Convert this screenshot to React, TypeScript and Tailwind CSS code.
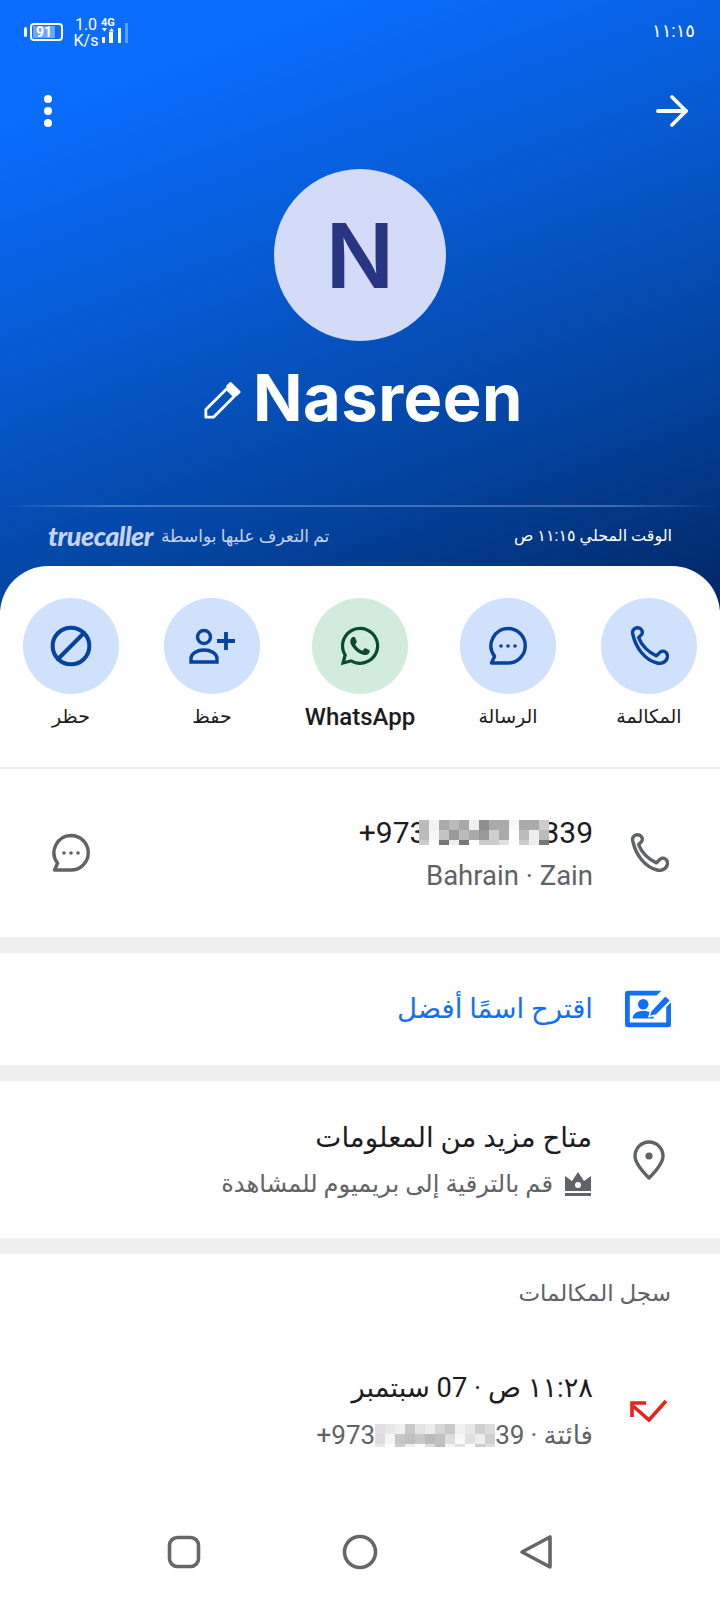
import type { ReactNode } from 'react'
import { ArrowRight, Ban } from 'lucide-react'
import { FaWhatsapp } from 'react-icons/fa'

const ARABIC = 'font-["Roboto","Noto_Sans","DejaVu_Sans",sans-serif]'

const PIXELS_DARK = [
  ['#bbbbbb', '#f2f2f2', '#aaaaaa', '#bbbbbb', '#a8a8a8', '#f0f0f0', '#8f8f8f', '#aaaaaa', '#aaaaaa', '#f8f8f8', '#aaaaaa', '#aaaaaa', '#cccccc'],
  ['#bbbbbb', '#f5f5f5', '#c4c4c4', '#999999', '#bbbbbb', '#aaaaaa', '#999999', '#d0d0d0', '#aaaaaa', '#ffffff', '#bbbbbb', '#eeeeee', '#bbbbbb'],
  ['#cccccc', '#ffffff', '#777777', '#eeeeee', '#777777', '#ffffff', '#cccccc', '#cccccc', '#e0e0e0', '#ffffff', '#cccccc', '#eeeeee', '#777777'],
]

const PIXELS_LIGHT = [
  ['#e0e0e0', '#e8e8e8', '#f0f0f0', '#c8c8c8', '#e4e4e4', '#ececec', '#d6d6d6', '#c8c8c8', '#f0f0f0', '#e8e8e8', '#d0d0d0', '#dcdcdc'],
  ['#dddddd', '#f4f4f4', '#c6c6c6', '#c0c0c0', '#c8c8c8', '#bcbcbc', '#c2c2c2', '#dedede', '#f8f8f8', '#e0e0e0', '#eeeeee', '#d0d0d0'],
  ['#e8e8e8', '#ffffff', '#cccccc', '#f0f0f0', '#ffffff', '#dddddd', '#bbbbbb', '#f4f4f4', '#e0e0e0', '#ffffff', '#cccccc', '#dddddd'],
]

function Pixels({ rows, size, last }: { rows: string[][]; size: number; last: number }) {
  return (
    <span dir="ltr" className="relative inline-flex flex-col align-middle">
      {rows.map((row, r) => (
        <span key={r} className="flex">
          {row.map((c, i) => (
            <span key={i} style={{ backgroundColor: c, width: size, height: r === rows.length - 1 ? last : size }} />
          ))}
        </span>
      ))}
    </span>
  )
}

function PhoneIcon({ size = 40 }: { size?: number }) {
  return (
    <svg width={size} height={size} viewBox="0 0 40 40" fill="none" stroke="currentColor" strokeWidth="3.4" strokeLinejoin="round" className="shrink-0">
      <path d="M4 9C2.6 5 4.5 2.2 8 1.8 11 1.4 13.4 3.8 13.4 6.5 13.4 9 10.4 10 9.6 11.6 12 19 20 27 27.4 29.8 29 29 30 26 33 25.2 36 24.6 38.8 27 38.4 31 37.6 36 33 38.2 28 37 16 34 7 22 4 9Z" />
    </svg>
  )
}

function MessageIcon({ size = 40 }: { size?: number }) {
  return (
    <svg width={size} height={size} viewBox="0 0 40 40" fill="none" stroke="currentColor" strokeWidth="3.4" strokeLinejoin="round" className="shrink-0">
      <path d="M20 2.5A17.2 17.2 0 1 1 20 37H3.5L6.6 30.2A17.2 17.2 0 0 1 20 2.5Z" />
      <circle cx="13" cy="20" r="1.8" fill="currentColor" stroke="none" />
      <circle cx="20" cy="20" r="1.8" fill="currentColor" stroke="none" />
      <circle cx="27" cy="20" r="1.8" fill="currentColor" stroke="none" />
    </svg>
  )
}

function StatusBar() {
  return (
    <div dir="ltr" className="flex h-[60px] items-start justify-between pl-[24px] pr-[25px] pt-[17px] text-white">
      <div className="flex items-start">
        <div className="mr-[3px] mt-[10px] h-[10px] w-[3px] rounded-sm bg-white" />
        <div className="mt-[6px] flex h-[18px] w-[33px] items-center rounded-[4px] border-2 border-white pl-[1px]">
          <div className="flex h-[12px] w-[22px] items-center justify-center rounded-[1px] bg-white/40 font-['Roboto',sans-serif] text-[14px] font-bold leading-none">
            91
          </div>
        </div>
        <div className="ml-[10px] w-[26px] text-center font-['Roboto',sans-serif] text-[16px] leading-[16px]">
          1.0
          <br />
          K/s
        </div>
        <svg width="30" height="28" viewBox="0 0 30 28" fill="white" className="ml-[1px]">
          <text x="1" y="9" fontSize="11" fontWeight="700" fontFamily="Roboto, sans-serif">4G</text>
          <path d="M2 11h5l-2.5 3.5zM9 14.5h5L11.500 11z" />
          <rect x="2" y="20" width="3" height="6" />
          <rect x="9" y="15" width="4" height="11" />
          <rect x="18" y="11" width="3" height="15" />
          <rect x="25" y="6" width="3" height="20" opacity="0.35" />
        </svg>
      </div>
      <span dir="rtl" className={`${ARABIC} mt-[1px] text-[18px] leading-[26px]`}>
        ١١:١٥
      </span>
    </div>
  )
}

function Header() {
  return (
    <header className="h-[610px] bg-[linear-gradient(160deg,#0a6dff_0%,#0a6dff_14%,#0658cc_45%,#03419a_75%,#022663_100%)]">
      <StatusBar />
      <div dir="ltr" className="mt-[27px] flex items-center justify-between pl-[29px] pr-[24px] text-white">
        <div className="flex w-[38px] flex-col items-center gap-[4px]">
          <div className="h-[8px] w-[8px] rounded-full bg-white" />
          <div className="h-[8px] w-[8px] rounded-full bg-white" />
          <div className="h-[8px] w-[8px] rounded-full bg-white" />
        </div>
        <ArrowRight size={48} strokeWidth={1.9} />
      </div>
      <div className="mt-[34px] flex flex-col items-center">
        <div className="flex h-[172px] w-[172px] items-center justify-center rounded-full bg-[#d3dbf9] font-['Inter',sans-serif] text-[90px] font-semibold text-[#283583]">
          N
        </div>
        <div dir="ltr" className="mt-[19px] flex items-center pl-[6px]">
          <svg width="38" height="38" viewBox="0 0 40 40" fill="none" stroke="white" strokeWidth="3" strokeLinejoin="round" className="mt-[6px]">
            <path d="M3 37v-8L25 7l8 8-22 22z" />
            <path d="M29 1.500l9 9-3 3-9-9z" fill="white" />
          </svg>
          <span className="ml-[12px] font-['Inter',sans-serif] text-[65px] font-bold leading-[76px] tracking-[0.5px] text-white">
            Nasreen
          </span>
        </div>
      </div>
      <div className="mt-[69px] h-[2px] bg-[linear-gradient(90deg,transparent,rgba(255,255,255,0.25)_15%,rgba(255,255,255,0.25)_85%,transparent)]" />
      <div dir="ltr" className="mt-[14px] flex items-center justify-between pl-[48px] pr-[48px]">
        <div className="flex items-center gap-[8px]">
          <span className="font-['Lato',sans-serif] text-[27px] font-black italic leading-[30px] tracking-[-0.5px] text-[#c6d3ee]">
            truecaller
          </span>
          <span dir="rtl" className={`${ARABIC} text-[17px] leading-[30px] text-[#c6d3ee]`}>
            تم التعرف عليها بواسطة
          </span>
        </div>
        <span dir="rtl" className={`${ARABIC} text-[16px] leading-[30px] text-white`}>
          الوقت المحلي ١١:١٥ ص
        </span>
      </div>
    </header>
  )
}

function Action({ label, icon, green }: { label: string; icon: ReactNode; green?: boolean }) {
  return (
    <div className={`flex flex-col items-center ${green ? 'w-[110px]' : 'w-[96px]'}`}>
      <div className={`flex h-[96px] w-[96px] items-center justify-center rounded-full ${green ? 'bg-[#d1ebdc] text-[#0b4a2a]' : 'bg-[#cfe1fd] text-[#06429e]'}`}>
        {icon}
      </div>
      <div className={`mt-[7px] whitespace-nowrap leading-[32px] text-[#1c1c1e] ${green ? "font-['Roboto',sans-serif] text-[24px] font-medium" : `${ARABIC} text-[19px]`}`}>
        {label}
      </div>
    </div>
  )
}

function Band() {
  return <div className="h-[16px] bg-[#eef0f0]" />
}

function Sheet() {
  return (
    <div className="relative -mt-[44px] rounded-t-[48px] bg-white">
      <div className="flex h-[203px] justify-between border-b-2 border-[#e9ebeb] px-[23px] pt-[32px]">
        <Action label="المكالمة" icon={<PhoneIcon />} />
        <Action label="الرسالة" icon={<MessageIcon />} />
        <Action label="WhatsApp" green icon={<FaWhatsapp size={44} />} />
        <Action
          label="حفظ"
          icon={
            <svg width="46" height="36" viewBox="0 0 46 36" fill="none" stroke="currentColor" strokeWidth="3.4">
              <circle cx="15" cy="9" r="6.500" />
              <path d="M2 34v-3c0-6 7-9 13-9s13 3 13 9v3z" />
              <path d="M37 4v18M28 13h18" strokeWidth="3.8" />
            </svg>
          }
        />
        <Action label="حظر" icon={<Ban size={44} strokeWidth={2.2} className="-scale-x-100" />} />
      </div>

      <div className="flex h-[168px] items-center justify-between px-[51px] text-[#5f6368]">
        <div className="flex items-center gap-[36px]">
          <PhoneIcon />
          <div>
            <div dir="ltr" className="flex items-center justify-end font-['Roboto',sans-serif] text-[30px] leading-[38px] text-[#1c1c1e]">
              +973
              <span className="-mx-[7px] flex">
                <Pixels rows={PIXELS_DARK} size={10} last={5} />
              </span>
              339
            </div>
            <div dir="ltr" className="mt-[7px] text-right font-['Roboto',sans-serif] text-[27.5px] leading-[34px]">
              Bahrain · Zain
            </div>
          </div>
        </div>
        <MessageIcon />
      </div>
      <Band />

      <div className="flex h-[112px] items-center gap-[32px] pr-[49px] text-[#1170f5]">
        <svg width="46" height="38" viewBox="0 0 48 38" className="shrink-0" fill="currentColor">
          <path d="M3 0h35l-5 5H5v28h38V17l5-5v23a3 3 0 0 1-3 3H3a3 3 0 0 1-3-3V3a3 3 0 0 1 3-3z" />
          <circle cx="19" cy="14" r="5.500" />
          <path d="M8 29c0-5 4-8 11-8s11 3 11 8z" />
          <path d="M27 21L42 5l6 5-15 15-8 2z" stroke="white" strokeWidth="1.500" />
        </svg>
        <span className={`${ARABIC} text-[27.5px] leading-[38px]`}>اقترح اسمًا أفضل</span>
      </div>
      <Band />

      <div className="flex h-[157px] items-center gap-[37px] pr-[51px]">
        <svg width="40" height="42" viewBox="0 0 40 42" className="shrink-0" fill="none" stroke="#5f6368" strokeWidth="3.4">
          <path d="M20 39C12 31 6 24 6 17a14 14 0 0 1 28 0c0 7-6 14-14 22z" strokeLinejoin="round" />
          <circle cx="20" cy="17" r="3.600" fill="#5f6368" stroke="none" />
        </svg>
        <div>
          <div className={`${ARABIC} text-[27.7px] leading-[40px] text-[#1c1c1e]`}>متاح مزيد من المعلومات</div>
          <div className="mt-[9px] flex items-center gap-[11px]">
            <svg width="28" height="24" viewBox="0 0 28 24" className="shrink-0" fill="#5f6368">
              <path d="M1 4l7 5 6-9 6 9 7-5v15H1zM1 21h26v3H1z" />
              <circle cx="14" cy="13" r="3" fill="white" />
            </svg>
            <span className={`${ARABIC} text-[24.2px] leading-[34px] text-[#5f6368]`}>قم بالترقية إلى بريميوم للمشاهدة</span>
          </div>
        </div>
      </div>
      <Band />

      <div className={`${ARABIC} pr-[49px] pt-[24px] text-[23px] leading-[32px] text-[#5f6368]`}>سجل المكالمات</div>

      <div className="mt-[59px] flex items-center gap-[37px] pr-[52px]">
        <svg width="38" height="24" viewBox="0 0 38 24" className="shrink-0" fill="none" stroke="#e8231a" strokeWidth="3.6">
          <path d="M36 2L19 21 3 7" />
          <path d="M2 18V4h14" />
        </svg>
        <div>
          <div className={`${ARABIC} text-[27.3px] leading-[38px] text-[#1c1c1e]`}>١١:٢٨ ص · 07 سبتمبر</div>
          <div className={`${ARABIC} mt-[11px] flex items-center text-[26px] leading-[34px] text-[#5f6368]`}>
            <span>فائتة · </span>
            <span dir="ltr" className="mr-[6px] flex items-center font-['Roboto',sans-serif]">
              +973
              <Pixels rows={PIXELS_LIGHT} size={10} last={3} />
              39
            </span>
          </div>
        </div>
      </div>
    </div>
  )
}

function NavBar() {
  return (
    <div dir="ltr" className="mt-auto flex h-[96px] items-center justify-center gap-[140px] bg-white">
      <svg width="36" height="36" viewBox="0 0 36 36" fill="none" stroke="#666666" strokeWidth="3.6">
        <rect x="3.500" y="3.500" width="29" height="29" rx="8" />
      </svg>
      <svg width="36" height="36" viewBox="0 0 36 36" fill="none" stroke="#666666" strokeWidth="3.6">
        <circle cx="18" cy="18" r="15.500" />
      </svg>
      <svg width="36" height="36" viewBox="0 0 36 36" fill="none" stroke="#666666" strokeWidth="3.6" strokeLinejoin="round">
        <path d="M4 18L32 3v30z" />
      </svg>
    </div>
  )
}

export default function App() {
  return (
    <div dir="rtl" className="flex h-[1600px] w-[720px] flex-col overflow-hidden bg-white">
      <Header />
      <Sheet />
      <NavBar />
    </div>
  )
}
